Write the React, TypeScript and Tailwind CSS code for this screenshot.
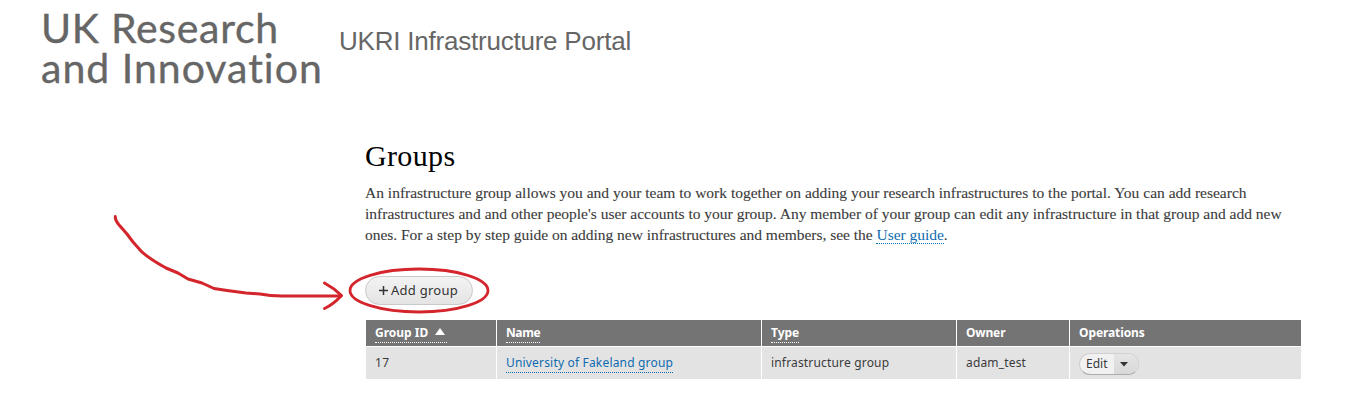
import React from 'react';

const introLines = [
  'An infrastructure group allows you and your team to work together on adding your research infrastructures to the portal. You can add research',
  "infrastructures and and other people's user accounts to your group. Any member of your group can edit any infrastructure in that group and add new",
];

function Header() {
  return (
    <header className="flex h-[100px] pl-[41px]">
      <div className="w-[298px] whitespace-nowrap pt-[8px] font-['Lato',sans-serif] text-[41px] leading-[40px] text-[#666666] [-webkit-text-stroke:0.35px_#666666]">
        <div className="tracking-[0.7px]">UK Research</div>
        <div className="tracking-[1px]">and Innovation</div>
      </div>
      <div className="pt-[24px] font-['Liberation_Sans',sans-serif] text-[26px] leading-[34px] tracking-[-0.22px] whitespace-nowrap text-[#666666]">
        UKRI Infrastructure Portal
      </div>
    </header>
  );
}

function Annotation() {
  return (
    <svg className="pointer-events-none absolute top-0 left-0" width="1356" height="420" fill="none" stroke="#d4242c" strokeWidth="3" strokeLinecap="round" strokeLinejoin="round">
      <path d="M115.3 216.5C115 221 117 222.5 120 226L127 234L133 242L141 251C147 257 157 263 166 268L178 273L188 279L202 283L214 288.500Q229 291 246 293L260 294Q270 296 282 296H341" />
      <path d="M324.500 283C330 286 336 290 341.500 295.500C336 301.500 330 306 324.500 308.500" />
      <ellipse cx="419" cy="290.500" rx="69" ry="21.500" strokeWidth="2.800" />
    </svg>
  );
}

export default function App() {
  return (
    <div className="relative h-[420px] w-[1356px] overflow-hidden bg-white">
      <Header />
      <main className="pl-[365px]">
        <h1 className="pt-[38px] font-['Liberation_Serif',serif] text-[30px] leading-[36px] tracking-[0.35px] text-black">Groups</h1>
        <div className="mt-[8px] whitespace-nowrap font-['Liberation_Serif',serif] text-[15.5px] leading-[21px] text-[#3b3b3b] [-webkit-text-stroke:0.1px_#3b3b3b]">
          {introLines.map((line) => (
            <div key={line}>{line}</div>
          ))}
          <div className="tracking-[-0.025px]">
            ones. For a step by step guide on adding new infrastructures and members, see the{' '}
            <a className="inline-block h-[18px] border-b border-dotted border-[#0071b3] leading-[18px] text-[#0f6bb0] [-webkit-text-stroke:0px]">User guide</a>.
          </div>
        </div>
        <button className="mt-[31px] flex h-[29px] w-[108px] items-center rounded-full border border-[#c9c9c9] bg-linear-to-b from-[#f3f3f3] to-[#e4e4e4] pl-[13px] font-['Noto_Sans',sans-serif] text-[13px] tracking-[0.25px] whitespace-nowrap text-[#333333]">
          <svg className="mr-[3px] shrink-0" width="9" height="9" stroke="#333" strokeWidth="1.500"><path d="M0 4.500H9M4.500 0V9" /></svg>
          Add group
        </button>
        <div className="mt-[15px] ml-px grid w-[935px] grid-cols-[130px_264px_194px_112px_231px] gap-px bg-white font-['Noto_Sans',sans-serif] text-[12px] whitespace-nowrap text-[#3b3b3b] [&>div]:pl-[9px]">
          <div className="flex h-[26px] items-start bg-[#747474] pt-[4px] font-bold text-white">
            <span className="flex h-[19px] w-[72px] items-start border-b border-dotted border-white leading-[18px]">
              Group ID
              <svg className="mt-[4px] ml-[7px]" width="10" height="7" fill="white"><path d="M0 7L5 0L10 7Z" /></svg>
            </span>
          </div>
          <div className="h-[26px] bg-[#747474] pt-[4px] font-bold text-white"><span className="inline-block h-[19px] border-b border-dotted border-white leading-[18px] tracking-[-0.4px]">Name</span></div>
          <div className="h-[26px] bg-[#747474] pt-[4px] font-bold text-white"><span className="inline-block h-[19px] border-b border-dotted border-white leading-[18px]">Type</span></div>
          <div className="h-[26px] bg-[#747474] pt-[4px] leading-[18px] font-bold tracking-[-0.15px] text-white">Owner</div>
          <div className="h-[26px] bg-[#747474] pt-[4px] leading-[18px] font-bold tracking-[-0.1px] text-white">Operations</div>
          <div className="h-[32px] bg-[#e3e3e3] pt-[7px] leading-[18px] tracking-[0.5px]">17</div>
          <div className="h-[32px] bg-[#e3e3e3] pt-[7px]"><a className="inline-block h-[19px] border-b border-dotted border-[#0071b3] leading-[18px] tracking-[0.18px] text-[#0f6bb0]">University of Fakeland group</a></div>
          <div className="h-[32px] bg-[#e3e3e3] pt-[7px] leading-[18px] tracking-[0.17px]">infrastructure group</div>
          <div className="h-[32px] bg-[#e3e3e3] pt-[7px] leading-[18px] tracking-[0.17px]">adam_test</div>
          <div className="h-[32px] bg-[#e3e3e3] pt-[6px]">
            <div className="flex h-[22px] w-[60px] overflow-hidden rounded-full border border-[#d0d0d0] border-b-[#adadad] bg-[#f1f1f1] leading-[20px]">
              <span className="w-[34px] pl-[6px]">Edit</span>
              <span className="flex flex-1 items-center bg-linear-to-b from-[#e5e5e5] to-[#d8d8d8] pl-[6px]">
                <svg width="8" height="5" fill="#333"><path d="M0 0H8L4 4.500Z" /></svg>
              </span>
            </div>
          </div>
        </div>
      </main>
      <Annotation />
    </div>
  );
}
